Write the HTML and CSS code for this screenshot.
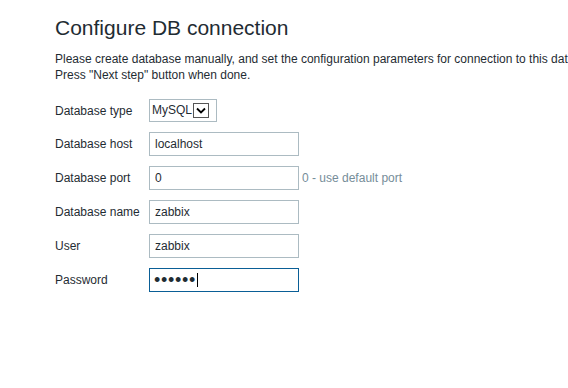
FILE: index.html
```html
<!DOCTYPE html>
<html>
<head>
<meta charset="utf-8">
<link rel="stylesheet" href="styles.css">
</head>
<body>
<div class="page">
  <h1 class="title">Configure DB connection</h1>
  <p class="intro">Please create database manually, and set the configuration parameters for connection to this database.<br>Press "Next step" button when done.</p>
  <div class="form">
    <div class="label">Database type</div>
    <div class="field">
      <div class="select">
        <span class="select-value">MySQL</span>
        <span class="select-btn"><svg width="10" height="7" viewBox="0 0 10 7"><path d="M1 1.5 L5 5.5 L9 1.5" fill="none" stroke="#000" stroke-width="1.8"/></svg></span>
      </div>
    </div>
    <div class="label">Database host</div>
    <div class="field"><input class="input" type="text" value="localhost"></div>
    <div class="label">Database port</div>
    <div class="field"><input class="input" type="text" value="0"><span class="hint">0 - use default port</span></div>
    <div class="label">Database name</div>
    <div class="field"><input class="input" type="text" value="zabbix"></div>
    <div class="label">User</div>
    <div class="field"><input class="input" type="text" value="zabbix"></div>
    <div class="label">Password</div>
    <div class="field"><span class="pw-wrap"><input class="input input-focus input-pw" type="password" value="zabbix"><span class="caret"></span></span></div>
  </div>
</div>
</body>
</html>
```
FILE: styles.css
```css
html, body {
  margin: 0;
  padding: 0;
  background: #ffffff;
  overflow: hidden;
}
body {
  font-family: "Liberation Sans", Arial, sans-serif;
  font-size: 12px;
  color: #1f2c33;
}
.page {
  padding: 16px 0 0 55px;
  width: 700px;
}
.title {
  margin: 0;
  font-size: 21px;
  font-weight: normal;
  line-height: 23px;
  white-space: nowrap;
}
.intro {
  margin: 12px 0 0 0;
  line-height: 16px;
  white-space: nowrap;
}
.form {
  margin-top: 16px;
  display: grid;
  grid-template-columns: 94px auto;
  row-gap: 10px;
  align-items: center;
}
.label {
  line-height: 14px;
}
.field {
  display: flex;
  align-items: center;
}
.select {
  box-sizing: border-box;
  width: 68px;
  height: 23px;
  border: 1px solid #acbbc2;
  display: flex;
  align-items: center;
  padding-left: 2px;
  font-size: 12px;
  background: #fff;
}
.select-value {
  width: 41px;
  line-height: 15px;
  white-space: nowrap;
}
.select-btn {
  box-sizing: border-box;
  width: 16px;
  height: 15px;
  border: 1px solid #555;
  display: flex;
  align-items: center;
  justify-content: center;
  background: #fff;
}
.input {
  box-sizing: border-box;
  width: 150px;
  height: 24px;
  border: 1px solid #acbbc2;
  padding: 0 5px;
  margin: 0;
  font-family: "Liberation Sans", Arial, sans-serif;
  font-size: 12px;
  color: #1f2c33;
  background: #fff;
  outline: none;
}
.input-focus {
  border-color: #0a5e96;
}
.input-pw {
  font-size: 18px;
  letter-spacing: 0.7px;
  padding-left: 4px;
}
.pw-wrap {
  position: relative;
  display: block;
  height: 24px;
}
.caret {
  position: absolute;
  left: 48px;
  top: 5px;
  width: 1px;
  height: 14px;
  background: #000;
}
.hint {
  margin-left: 3px;
  color: #768d99;
}
```
